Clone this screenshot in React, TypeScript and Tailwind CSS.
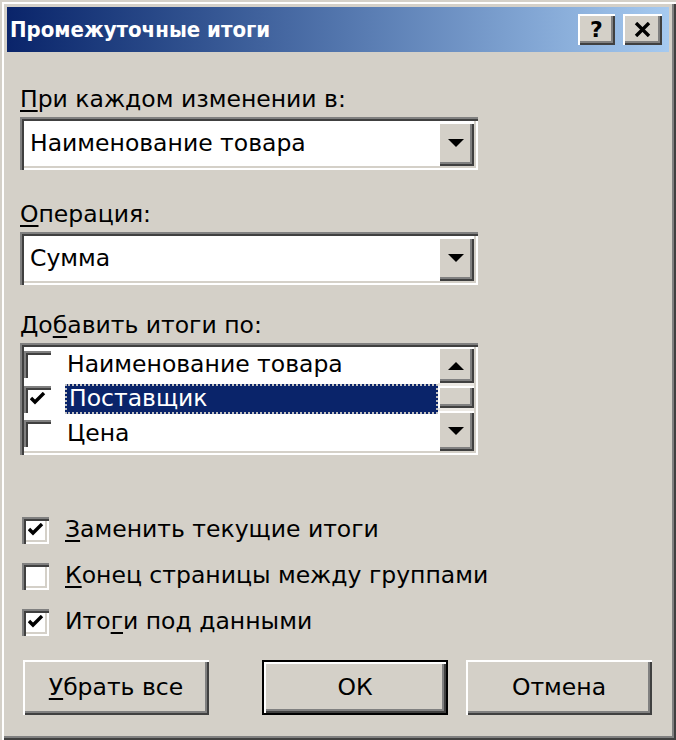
import type { ReactNode } from 'react';

const FONT = "font-['DejaVu_Sans',sans-serif]";

const raised =
  'bg-[#d4d0c8] shadow-[inset_2px_2px_0_#ffffff,inset_-2px_-2px_0_#404040,inset_-4px_-4px_0_#808080]';
const sunken =
  'shadow-[inset_2px_2px_0_#808080,inset_4px_4px_0_#404040,inset_-2px_-2px_0_#ffffff,inset_-4px_-4px_0_#d4d0c8]';

function Arrow({ up = false }: { up?: boolean }) {
  return (
    <svg width="16" height="9" viewBox="0 0 16 9">
      <path d={up ? 'M0 9 L8 1 L16 9 Z' : 'M0 0 L16 0 L8 8 Z'} fill="#000" />
    </svg>
  );
}

function Check() {
  return (
    <svg width="16" height="14" viewBox="0 0 16 14">
      <path d="M1 6 L5 10 L14 1" stroke="#000" strokeWidth="3.4" fill="none" />
    </svg>
  );
}

function Box({ checked, flat = false }: { checked?: boolean; flat?: boolean }) {
  return (
    <div
      className={`flex h-[27px] w-[27px] shrink-0 items-center justify-center bg-white ${
        flat
          ? 'shadow-[inset_2px_2px_0_#808080,inset_4px_4px_0_#404040]'
          : sunken
      }`}
    >
      {checked && <Check />}
    </div>
  );
}

// underline one letter, like an access key
function Key({ children }: { children: ReactNode }) {
  return <span className="underline decoration-2 underline-offset-[3px]">{children}</span>;
}

function Combo({ value }: { value: string }) {
  return (
    <div className={`flex h-[53px] w-[458px] items-center bg-white p-[4px] ${sunken}`}>
      <span className="flex-1 pl-[6px]">{value}</span>
      <div className={`flex h-[44px] w-[36px] items-center justify-center ${raised}`}>
        <Arrow />
      </div>
    </div>
  );
}

function Button({ children, primary = false }: { children: ReactNode; primary?: boolean }) {
  return (
    <div
      className={`flex h-[55px] w-[186px] items-center justify-center ${
        primary ? 'border-2 border-black' : ''
      } ${raised}`}
    >
      {children}
    </div>
  );
}

const items = [
  { label: 'Наименование товара', checked: false },
  { label: 'Поставщик', checked: true, selected: true },
  { label: 'Цена', checked: false },
];

export default function App() {
  return (
    <div
      className={`flex h-[740px] w-[676px] flex-col bg-[#d4d0c8] p-[7px] text-[23.5px] text-black ${FONT} shadow-[inset_2px_2px_0_#d4d0c8,inset_4px_4px_0_#ffffff,inset_-2px_-2px_0_#404040,inset_-4px_-4px_0_#808080]`}
    >
      {/* title bar */}
      <div className="flex h-[45px] shrink-0 items-center bg-gradient-to-r from-[#0a246a] to-[#a6caf0] pl-[3px] pr-[7px]">
        <span className="flex-1 font-['DejaVu_Sans_Condensed','DejaVu_Sans',sans-serif] text-[22px] font-bold text-white">
          Промежуточные итоги
        </span>
        <div className={`flex h-[31px] w-[37px] items-center justify-center text-[22px] font-bold ${raised}`}>
          ?
        </div>
        <div className={`ml-[8px] flex h-[31px] w-[39px] items-center justify-center ${raised}`}>
          <svg width="17" height="15" viewBox="0 0 17 15">
            <path d="M2 1 L15 14 M15 1 L2 14" stroke="#000" strokeWidth="3.4" />
          </svg>
        </div>
      </div>

      <div className="flex flex-1 flex-col px-[13px]">
        <div className="mt-[34px] h-[26px] leading-[26px]">
          <Key>П</Key>ри каждом изменении в:
        </div>
        <div className="mt-[5px]">
          <Combo value="Наименование товара" />
        </div>

        <div className="mt-[31px] h-[26px] leading-[26px]">
          <Key>О</Key>перация:
        </div>
        <div className="mt-[5px]">
          <Combo value="Сумма" />
        </div>

        <div className="mt-[27px] h-[26px] leading-[26px]">
          До<Key>б</Key>авить итоги по:
        </div>
        <div className={`mt-[5px] flex h-[112px] w-[458px] bg-white p-[4px] ${sunken}`}>
          <div className="flex flex-1 flex-col">
            {items.map((it) => (
              <div key={it.label} className="flex h-[35px] items-center">
                <Box checked={it.checked} flat />
                <div
                  className={`ml-[14px] flex h-[30px] flex-1 items-center pl-[2px] ${
                    it.selected
                      ? 'border-2 border-dotted border-[#c0c0c0] bg-[#0a246a] text-white'
                      : ''
                  }`}
                >
                  {it.label}
                </div>
              </div>
            ))}
          </div>
          <div className="flex w-[36px] flex-col bg-[#ece9e4]">
            <div className={`flex h-[36px] items-center justify-center ${raised}`}>
              <Arrow up />
            </div>
            <div className="h-[3px]" />
            <div className={`h-[22px] ${raised}`} />
            <div className="h-[3px]" />
            <div className={`flex flex-1 items-center justify-center ${raised}`}>
              <Arrow />
            </div>
          </div>
        </div>

        <div className="mt-[52px] flex flex-col">
          {[
            { pre: '', key: 'З', post: 'аменить текущие итоги', checked: true },
            { pre: '', key: 'К', post: 'онец страницы между группами', checked: false },
            { pre: 'Ито', key: 'г', post: 'и под данными', checked: true },
          ].map((r) => (
            <div key={r.post} className="flex h-[46px] items-center pl-[2px]">
              <Box checked={r.checked} />
              <span className="ml-[16px]">
                {r.pre}
                <Key>{r.key}</Key>
                {r.post}
              </span>
            </div>
          ))}
        </div>

        <div className="mt-[15px] flex items-center justify-between pl-[3px] pr-[4px]">
          <Button>
            <span>
              <Key>У</Key>брать все
            </span>
          </Button>
          <div className="flex gap-[18px]">
            <Button primary>ОК</Button>
            <Button>Отмена</Button>
          </div>
        </div>
      </div>
    </div>
  );
}
